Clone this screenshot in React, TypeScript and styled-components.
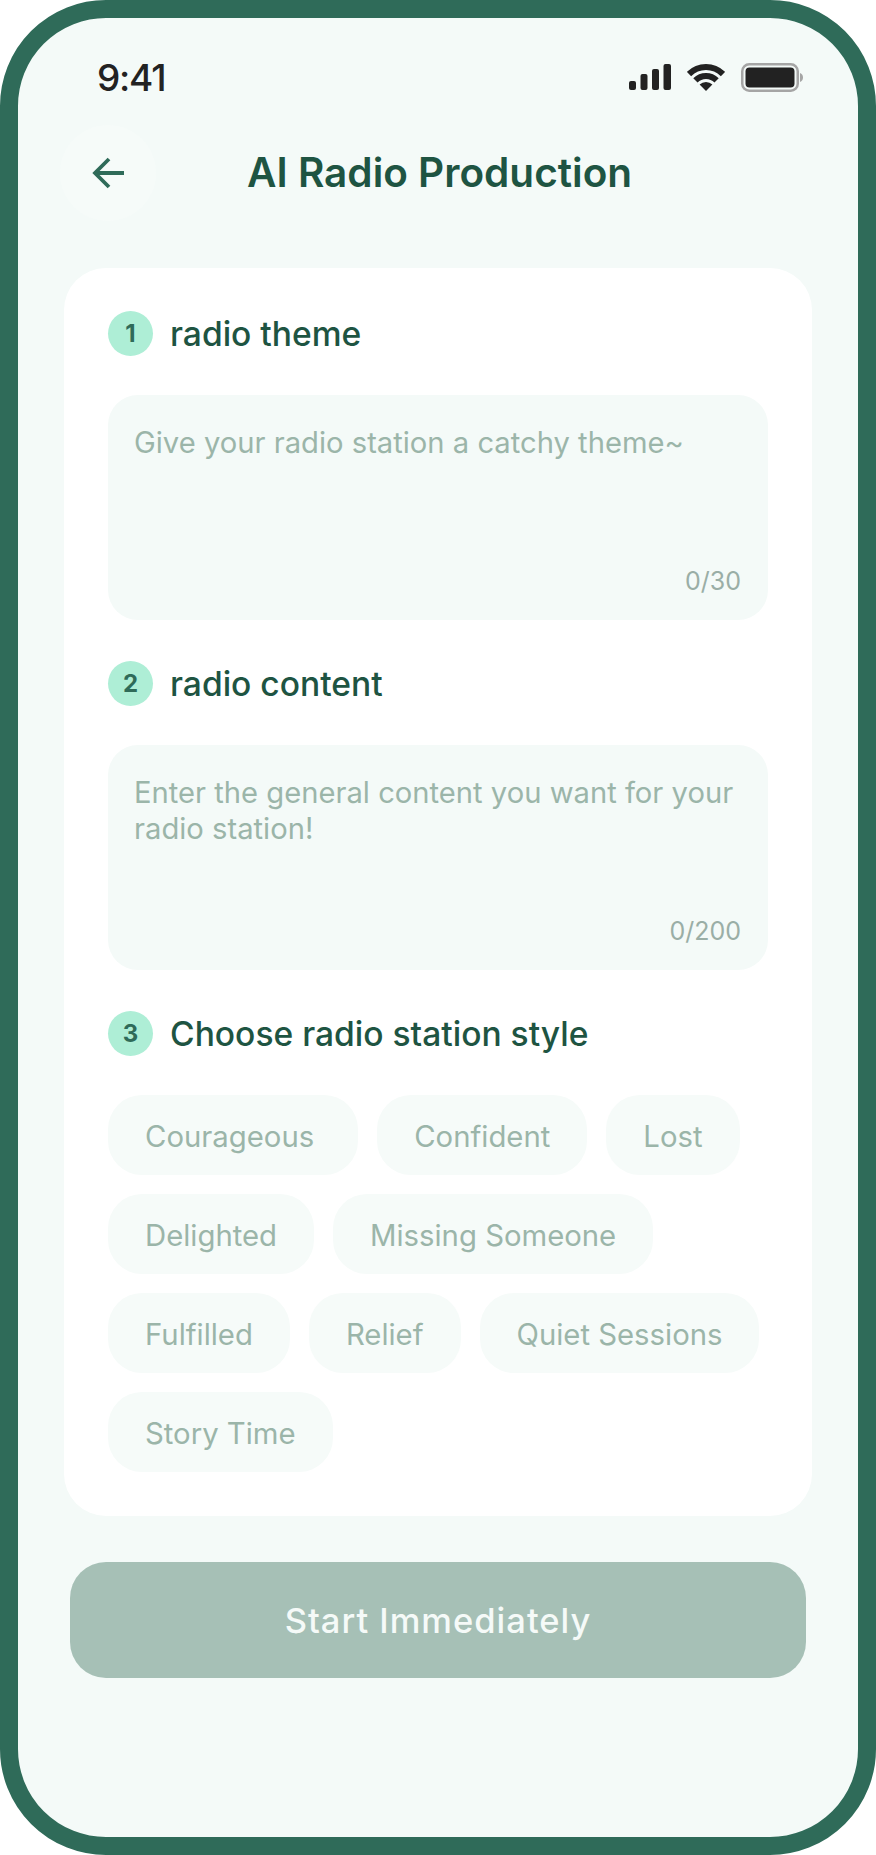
import styled, { createGlobalStyle } from "styled-components";

const GlobalStyle = createGlobalStyle`
  html, body {
    margin: 0;
    padding: 0;
    background: #ffffff;
  }
  * {
    box-sizing: border-box;
  }
`;

const Phone = styled.div`
  width: 876px;
  height: 1855px;
  border: 18px solid #2f6b59;
  border-radius: 106px;
  background: #f4faf8;
  font-family: Inter, "Liberation Sans", sans-serif;
  overflow: hidden;
`;

const StatusBar = styled.div`
  height: 108px;
  padding: 10px 55px 0 79px;
  display: flex;
  align-items: center;
  justify-content: space-between;
`;

const Time = styled.span`
  font-size: 37px;
  font-weight: 500;
  letter-spacing: -1.2px;
  color: #222222;
`;

const StatusIcons = styled.div`
  display: flex;
  align-items: center;
  gap: 16px;
`;

const Header = styled.div`
  height: 94px;
  padding-left: 42px;
  display: flex;
  align-items: center;
`;

const BackButton = styled.div`
  width: 96px;
  height: 96px;
  border-radius: 50%;
  background: #f6fbf9;
  display: flex;
  align-items: center;
  justify-content: center;
  flex-shrink: 0;
`;

const Title = styled.h1`
  margin: -2px 0 0 91px;
  font-size: 40.5px;
  font-weight: 600;
  color: #1e5442;
`;

const Card = styled.div`
  margin: 48px 46px 0;
  padding: 43px 44px 44px;
  background: #ffffff;
  border-radius: 42px;
`;

const Section = styled.section`
  & + & {
    margin-top: 41px;
  }
`;

const SectionHead = styled.div`
  display: flex;
  align-items: center;
  gap: 17px;
`;

const Badge = styled.span`
  width: 45px;
  height: 45px;
  border-radius: 50%;
  background: #aeeed6;
  color: #2f6b59;
  font-size: 24px;
  font-weight: 700;
  display: flex;
  align-items: center;
  justify-content: center;
`;

const SectionTitle = styled.h2`
  margin: 0;
  font-size: 33.6px;
  font-weight: 500;
  color: #1e5442;
`;

const Field = styled.div`
  margin-top: 39px;
  height: 225px;
  padding: 30px 27px 24px 26px;
  border-radius: 30px;
  background: #f4faf8;
  display: flex;
  flex-direction: column;
  justify-content: space-between;
`;

const Placeholder = styled.div`
  font-size: 29.2px;
  line-height: 36px;
  color: #9bb5a9;
`;

const Counter = styled.div`
  font-size: 25px;
  line-height: 30px;
  text-align: right;
  color: #9aaea6;
`;

const Chips = styled.div`
  margin-top: 39px;
  display: flex;
  flex-wrap: wrap;
  gap: 19px;
`;

const Chip = styled.span<{ $wide?: boolean }>`
  height: 80px;
  padding: 2px ${(p) => (p.$wide ? 44 : 37)}px 0 37px;
  border-radius: 34px;
  background: #f6fbf9;
  font-size: 29.3px;
  color: #9bb5a9;
  display: flex;
  align-items: center;
`;

const StartButton = styled.button`
  display: block;
  width: 736px;
  height: 116px;
  margin: 46px 0 0 52px;
  border: none;
  border-radius: 36px;
  background: #a6c0b6;
  color: #f5faf8;
  font-family: inherit;
  font-size: 34.5px;
  font-weight: 450;
  letter-spacing: 1px;
`;

const SignalIcon = () => (
  <svg width="42" height="26" viewBox="0 0 42 26" fill="#222222">
    <rect x="0" y="17" width="7" height="9" rx="2" />
    <rect x="11.5" y="10" width="7" height="16" rx="2" />
    <rect x="23" y="5" width="7" height="21" rx="2" />
    <rect x="34.5" y="0" width="7.5" height="26" rx="2" />
  </svg>
);

const WifiIcon = () => (
  <svg width="38" height="27" viewBox="0 0 38 27" fill="none" stroke="#222222" strokeWidth="6">
    <path d="M2.03 10.03 A24 24 0 0 1 35.97 10.03" />
    <path d="M8.4 16.4 A15 15 0 0 1 29.6 16.4" />
    <path d="M19 27 L12.6 20.6 A9 9 0 0 1 25.4 20.6 Z" fill="#222222" stroke="none" />
  </svg>
);

const BatteryIcon = () => (
  <svg width="62" height="29" viewBox="0 0 62 29">
    <rect x="1.25" y="1.25" width="55.5" height="26.5" rx="7" fill="none" stroke="#a5a5a5" strokeWidth="2.5" />
    <rect x="4.5" y="4.5" width="49" height="20" rx="4" fill="#222222" />
    <path d="M59 10 C61 10.5 62 12.5 62 14.5 C62 16.5 61 18.5 59 19 Z" fill="#a5a5a5" />
  </svg>
);

const BackArrow = () => (
  <svg width="32" height="32" viewBox="0 0 32 32" fill="none" stroke="#2f6b59" strokeWidth="3.8" strokeLinejoin="miter">
    <path d="M32 16 H3" />
    <path d="M17 2 L3 16 L17 30" />
  </svg>
);

const styles = [
  "Courageous",
  "Confident",
  "Lost",
  "Delighted",
  "Missing Someone",
  "Fulfilled",
  "Relief",
  "Quiet Sessions",
  "Story Time",
];

export default function App() {
  return (
    <>
      <GlobalStyle />
      <Phone>
        <StatusBar>
          <Time>9:41</Time>
          <StatusIcons>
            <SignalIcon />
            <WifiIcon />
            <BatteryIcon />
          </StatusIcons>
        </StatusBar>
        <Header>
          <BackButton>
            <BackArrow />
          </BackButton>
          <Title>AI Radio Production</Title>
        </Header>
        <Card>
          <Section>
            <SectionHead>
              <Badge>1</Badge>
              <SectionTitle>radio theme</SectionTitle>
            </SectionHead>
            <Field>
              <Placeholder>Give your radio station a catchy theme~</Placeholder>
              <Counter>0/30</Counter>
            </Field>
          </Section>
          <Section>
            <SectionHead>
              <Badge>2</Badge>
              <SectionTitle>radio content</SectionTitle>
            </SectionHead>
            <Field>
              <Placeholder>Enter the general content you want for your radio station!</Placeholder>
              <Counter>0/200</Counter>
            </Field>
          </Section>
          <Section>
            <SectionHead>
              <Badge>3</Badge>
              <SectionTitle>Choose radio station style</SectionTitle>
            </SectionHead>
            <Chips>
              {styles.map((name) => (
                <Chip key={name} $wide={name === "Courageous"}>
                  {name}
                </Chip>
              ))}
            </Chips>
          </Section>
        </Card>
        <StartButton>Start Immediately</StartButton>
      </Phone>
    </>
  );
}
